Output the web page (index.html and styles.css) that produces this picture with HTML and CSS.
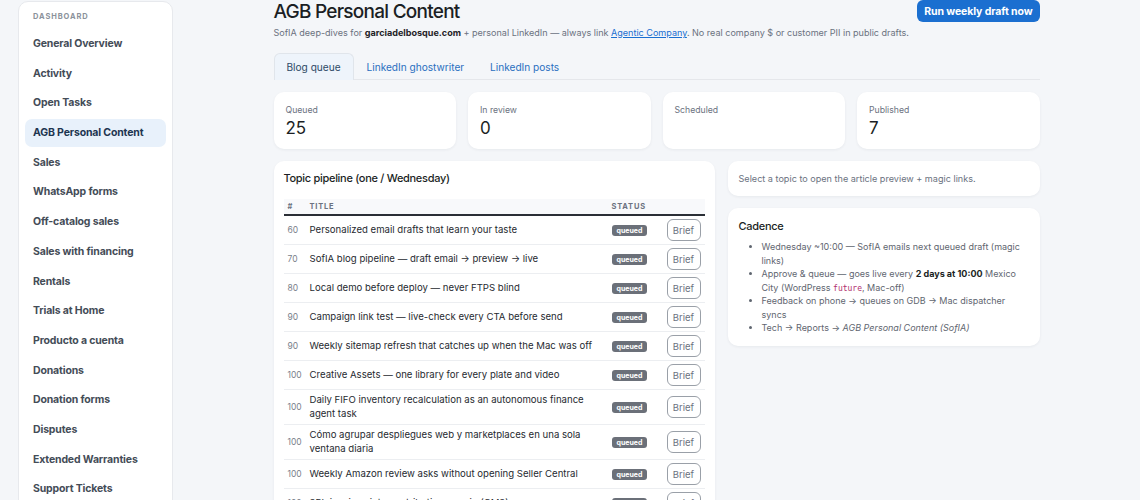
FILE: index.html
```html
<!DOCTYPE html>
<html>
<head>
<meta charset="utf-8">
<link rel="stylesheet" href="styles.css">
</head>
<body>
<div class="layout">
  <aside class="sidebar">
    <div class="side-label">DASHBOARD</div>
    <nav class="nav">
      <a class="nav-item">General Overview</a>
      <a class="nav-item">Activity</a>
      <a class="nav-item">Open Tasks</a>
      <a class="nav-item active">AGB Personal Content</a>
      <a class="nav-item">Sales</a>
      <a class="nav-item">WhatsApp forms</a>
      <a class="nav-item">Off-catalog sales</a>
      <a class="nav-item">Sales with financing</a>
      <a class="nav-item">Rentals</a>
      <a class="nav-item">Trials at Home</a>
      <a class="nav-item">Producto a cuenta</a>
      <a class="nav-item">Donations</a>
      <a class="nav-item">Donation forms</a>
      <a class="nav-item">Disputes</a>
      <a class="nav-item">Extended Warranties</a>
      <a class="nav-item">Support Tickets</a>
    </nav>
  </aside>
  <main class="main">
    <div class="container">
      <header class="page-head">
        <h1 class="title">AGB Personal Content</h1>
        <button class="primary-btn">Run weekly draft now</button>
      </header>
      <p class="subtitle">SofIA deep-dives for <b>garciadelbosque.com</b> + personal LinkedIn — always link <a class="link">Agentic Company</a>. No real company $ or customer PII in public drafts.</p>

      <div class="tabs">
        <div class="tab active">Blog queue</div>
        <div class="tab">LinkedIn ghostwriter</div>
        <div class="tab">LinkedIn posts</div>
      </div>

      <div class="stats">
        <div class="stat"><div class="stat-label">Queued</div><div class="stat-value">25</div></div>
        <div class="stat"><div class="stat-label">In review</div><div class="stat-value">0</div></div>
        <div class="stat"><div class="stat-label">Scheduled</div><div class="stat-value"></div></div>
        <div class="stat"><div class="stat-label">Published</div><div class="stat-value">7</div></div>
      </div>

      <div class="columns">
        <section class="card pipeline">
          <h2 class="card-title">Topic pipeline (one / Wednesday)</h2>
          <table class="table">
            <thead>
              <tr><th class="c-num">#</th><th>Title</th><th class="c-status">Status</th><th class="c-act"></th></tr>
            </thead>
            <tbody>
              <tr><td class="c-num">60</td><td>Personalized email drafts that learn your taste</td><td><span class="badge">queued</span></td><td class="c-act"><button class="brief">Brief</button></td></tr>
              <tr><td class="c-num">70</td><td>SofIA blog pipeline — draft email → preview → live</td><td><span class="badge">queued</span></td><td class="c-act"><button class="brief">Brief</button></td></tr>
              <tr><td class="c-num">80</td><td>Local demo before deploy — never FTPS blind</td><td><span class="badge">queued</span></td><td class="c-act"><button class="brief">Brief</button></td></tr>
              <tr><td class="c-num">90</td><td>Campaign link test — live-check every CTA before send</td><td><span class="badge">queued</span></td><td class="c-act"><button class="brief">Brief</button></td></tr>
              <tr><td class="c-num">90</td><td>Weekly sitemap refresh that catches up when the Mac was off</td><td><span class="badge">queued</span></td><td class="c-act"><button class="brief">Brief</button></td></tr>
              <tr><td class="c-num">100</td><td>Creative Assets — one library for every plate and video</td><td><span class="badge">queued</span></td><td class="c-act"><button class="brief">Brief</button></td></tr>
              <tr><td class="c-num">100</td><td>Daily FIFO inventory recalculation as an autonomous finance agent task</td><td><span class="badge">queued</span></td><td class="c-act"><button class="brief">Brief</button></td></tr>
              <tr><td class="c-num">100</td><td>Cómo agrupar despliegues web y marketplaces en una sola ventana diaria</td><td><span class="badge">queued</span></td><td class="c-act"><button class="brief">Brief</button></td></tr>
              <tr><td class="c-num">100</td><td>Weekly Amazon review asks without opening Seller Central</td><td><span class="badge">queued</span></td><td class="c-act"><button class="brief">Brief</button></td></tr>
              <tr><td class="c-num">100</td><td>3PL invoices into contribution margin (CM2)</td><td><span class="badge">queued</span></td><td class="c-act"><button class="brief">Brief</button></td></tr>
            </tbody>
          </table>
        </section>

        <div class="side-col">
          <section class="card hint">Select a topic to open the article preview + magic links.</section>
          <section class="card cadence">
            <h2 class="card-title">Cadence</h2>
            <ul class="list">
              <li>Wednesday ~10:00 — SofIA emails next queued draft (magic links)</li>
              <li>Approve &amp; queue — goes live every <b>2 days at 10:00</b> Mexico City (WordPress <code>future</code>, Mac-off)</li>
              <li>Feedback on phone → queues on GDB → Mac dispatcher syncs</li>
              <li>Tech → Reports → <i>AGB Personal Content (SofIA)</i></li>
            </ul>
          </section>
        </div>
      </div>
    </div>
  </main>
</div>
</body>
</html>
```

FILE: styles.css
```css
* { box-sizing: border-box; }
html, body { margin: 0; padding: 0; }
body {
  background: #f4f6f9;
  font-family: Inter, "Noto Sans", "Liberation Sans", sans-serif;
  color: #1f2328;
  overflow: hidden;
}
.layout {
  display: flex;
  align-items: flex-start;
  height: 500px;
}
.sidebar {
  width: 155px;
  margin: 1px 0 0 18px;
  background: #fff;
  border: 1px solid #e7e9ed;
  border-radius: 10px;
  padding: 9px 6px 20px;
  flex-shrink: 0;
}
.side-label {
  font-size: 7.5px;
  font-weight: 700;
  letter-spacing: 0.9px;
  color: #8b929b;
  padding-left: 8px;
  line-height: 12px;
  margin-bottom: 7px;
}
.nav { display: flex; flex-direction: column; gap: 1.7px; }
.nav-item {
  display: block;
  font-size: 10.5px;
  font-weight: 700;
  color: #444c57;
  padding: 7px 8px;
  line-height: 14px;
  border-radius: 7px;
  letter-spacing: -0.15px;
}
.nav-item.active { background: #e8f1fb; color: #1d3550; }

.main { flex: 1; min-width: 0; }
.container { max-width: 766px; margin: 0 auto; }

.page-head {
  display: flex;
  justify-content: space-between;
  align-items: flex-start;
}
.title {
  margin: 0;
  font-size: 19px;
  line-height: 24px;
  font-weight: 500;
  letter-spacing: -0.75px;
  color: #1b1f24;
}
.subtitle {
  margin: 2px 0 0;
  font-size: 9.05px;
  line-height: 14px;
  color: #6b7280;
  white-space: nowrap;
}
.subtitle b { color: #1f2328; font-weight: 700; }
.link { color: #1a6fd1; text-decoration: underline; }
.primary-btn {
  background: #1b6fd0;
  color: #fff;
  border: 0;
  border-radius: 6px;
  font-family: inherit;
  font-size: 10.5px;
  font-weight: 700;
  height: 22px;
  padding: 0 7px;
  letter-spacing: -0.1px;
  white-space: nowrap;
}

.tabs {
  display: flex;
  margin-top: 13px;
  border-bottom: 1px solid #e5e7eb;
}
.tab {
  font-size: 10.1px;
  line-height: 26px;
  padding: 0 12px;
  color: #2a6fc0;
  border: 1px solid transparent;
  border-bottom: 0;
  border-radius: 6px 6px 0 0;
  margin-bottom: -1px;
}
.tab.active {
  background: #eef4fb;
  border-color: #e0e5eb;
  color: #2d4a66;
}

.stats {
  display: grid;
  grid-template-columns: repeat(4, 1fr);
  gap: 12px;
  margin-top: 12px;
}
.stat, .card {
  background: #fff;
  border-radius: 10px;
  box-shadow: 0 1px 3px rgba(20, 30, 50, 0.06);
}
.stat {
  height: 57px;
  padding: 12px 12px;
}
.stat-label { font-size: 8.7px; color: #6b7280; line-height: 12px; }
.stat-value { font-size: 17px; line-height: 20px; color: #1b1f24; margin-top: 2px; }

.columns {
  display: grid;
  grid-template-columns: 441px 1fr;
  gap: 13px;
  margin-top: 12px;
  align-items: start;
}
.card { padding: 10px 11px; }
.card-title {
  margin: 0;
  font-size: 11px;
  line-height: 16px;
  font-weight: 500;
  color: #1b1f24;
  letter-spacing: -0.3px;
}
.pipeline { padding: 9px 10px 20px; }
.table {
  width: 100%;
  border-collapse: collapse;
  margin-top: 13px;
}
.table th {
  background: #f8f9fb;
  font-size: 7.5px;
  font-weight: 700;
  letter-spacing: 0.8px;
  text-transform: uppercase;
  color: #6b7280;
  text-align: left;
  height: 16px;
  padding: 0 4px;
  border-bottom: 2px solid #2b2f36;
}
.table td {
  font-size: 9.6px;
  line-height: 14px;
  color: #262a30;
  padding: 3px 4px;
  border-bottom: 1px solid #eceef1;
  vertical-align: middle;
}
.table td.c-num { font-size: 8.5px; color: #7a818b; width: 22px; padding-right: 0; }
.table th.c-num { width: 22px; }
.c-status { width: 55px; }
.c-act { width: 40px; text-align: right; }
.badge {
  display: inline-block;
  background: #6b7079;
  color: #fff;
  font-size: 7px;
  font-weight: 700;
  line-height: 11px;
  padding: 0 5px;
  border-radius: 3px;
}
.brief {
  height: 22px;
  width: 34px;
  padding: 0;
  border: 1px solid #9aa0a8;
  border-radius: 6px;
  background: #fff;
  color: #6b7280;
  font-family: inherit;
  font-size: 9.5px;
}

.side-col { display: flex; flex-direction: column; gap: 12px; }
.hint {
  font-size: 9.1px;
  line-height: 13px;
  color: #6b7280;
  padding: 11px;
}
.cadence { padding: 10px 11px 11px; }
.list {
  margin: 6px 0 0;
  padding-left: 23px;
  font-size: 9px;
  line-height: 13.5px;
  color: #5f6670;
}
.list b { color: #1b1f24; }
.list code {
  font-family: "DejaVu Sans Mono", monospace;
  font-size: 8px;
  line-height: 1;
  color: #b0306e;
}
```
